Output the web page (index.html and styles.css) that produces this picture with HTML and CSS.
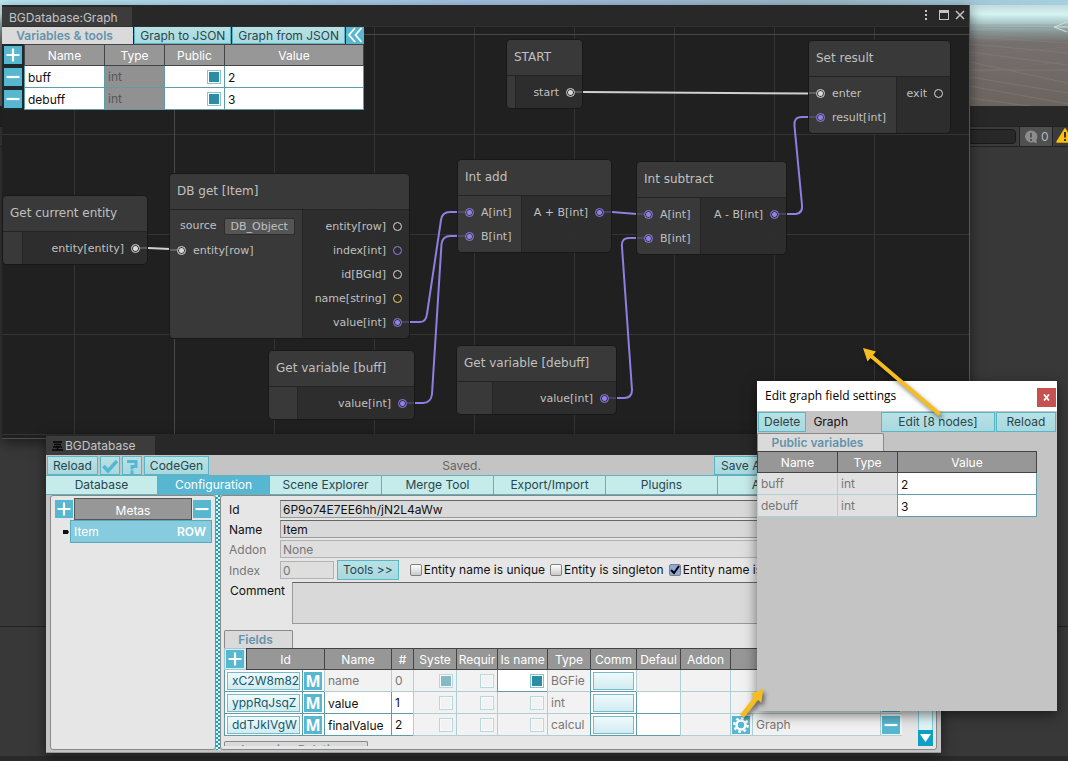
FILE: index.html
```html
<!DOCTYPE html>
<html lang="en">
<head>
<meta charset="utf-8">
<title>BGDatabase</title>
<link rel="stylesheet" href="styles.css">
</head>
<body>
<svg class="defs" aria-hidden="true">
  <symbol id="plus" viewBox="0 0 18 18"><path d="M9 2.5v13M2.5 9h13" stroke="#fff" stroke-width="2.2"/></symbol>
  <symbol id="minus" viewBox="0 0 18 18"><path d="M2.5 9h13" stroke="#fff" stroke-width="2.2"/></symbol>
</svg>
<div class="desktop">
  <div class="sky"></div>
  <svg class="scene" viewBox="0 0 98 106" aria-hidden="true">
    <g stroke="#8b8986" stroke-width="1" opacity=".4">
      <path d="M0 31l98 4M0 37l98 6M0 44l98 9M0 52l98 13M0 70h98M0 62l98 21M0 77l98 16M0 86l98 18M0 98l60 8M0 25h98M0 27l98 1" fill="none"/>
      <path d="M98 37L0 42M98 47L0 56M98 61L0 73" opacity=".4"/>
    </g>
    <path d="M97 22l-13 5 13 5M84 27h14" fill="none" stroke="#d3dede" stroke-width="1"/>
  </svg>
  <div class="console">
    <div class="search"></div>
    <span class="counter"><svg width="14" height="14" viewBox="0 0 14 14"><path d="M7 .5a6 6 0 0 1 5.500 9v4l-3-1.500A6 6 0 1 1 7 .5z" fill="#8c8c8c"/><path d="M7 3v4.500M7 9v2" stroke="#555" stroke-width="2"/></svg>0</span>
    <span class="warning"><svg width="18" height="16" viewBox="0 0 18 16"><path d="M9 1l8 13H1z" fill="#ffc107" stroke="#ffc107" stroke-width="1.500" stroke-linejoin="round"/><path d="M9 4v5.500M9 11v2" stroke="#333" stroke-width="2"/></svg></span>
  </div>

  <section class="window graph-window">
    <header class="titlebar">
      <h1 class="title-tab">BGDatabase:Graph</h1>
      <div class="window-tools">
        <svg width="42" height="14" viewBox="0 0 42 14"><g fill="#c4c4c4"><path d="M2 2h2v2H2zM2 6h2v2H2zM2 10h2v2H2z"/><path d="M16 2h10v3H16z"/></g><rect x="16.500" y="2.500" width="9" height="9" fill="none" stroke="#c4c4c4"/><path d="M33 3l8 8M41 3l-8 8" stroke="#c4c4c4" stroke-width="1.500"/></svg>
      </div>
    </header>
    <div class="canvas">
      <svg class="wires" aria-hidden="true"><g transform="translate(-2 -27)" fill="none" stroke="#8f7fe0" stroke-width="2">
        <path stroke="#d0d0cf" d="M583 92L809 93.500"/>
        <path stroke="#d0d0cf" d="M148 248L170 249"/>
        <path d="M787 214h9q7-1 6-9L794.500 126q-1-9 7-9h8"/>
        <path d="M410 322h10q6 0 7-8L441 220q1-8 9-8h8"/>
        <path d="M415 403h8q8 0 9-9L441.500 244q1-8 9-8h8"/>
        <path d="M612 212L637 214"/>
        <path d="M617 398h7q8 0 8-8L622 247q-1-9 7-9h8"/>
      </g></svg>

      <article class="node n-start"><h2>START</h2><div class="body"><div class="ins w9"></div><div class="outs"><p class="out on"><span>start</span><i></i></p></div></div></article>
      <article class="node n-result"><h2>Set result</h2><div class="body"><div class="ins w88"><p class="in on"><i></i><span>enter</span></p><p class="in on int"><i></i><span>result[int]</span></p></div><div class="outs"><p class="out"><span>exit</span><i></i></p></div></div></article>
      <article class="node n-add"><h2>Int add</h2><div class="body"><div class="ins w64"><p class="in on int"><i></i><span>A[int]</span></p><p class="in on int"><i></i><span>B[int]</span></p></div><div class="outs"><p class="out on int"><span>A + B[int]</span><i></i></p></div></div></article>
      <article class="node n-sub"><h2>Int subtract</h2><div class="body"><div class="ins w64"><p class="in on int"><i></i><span>A[int]</span></p><p class="in on int"><i></i><span>B[int]</span></p></div><div class="outs"><p class="out on int"><span>A - B[int]</span><i></i></p></div></div></article>
      <article class="node n-db"><h2>DB get [Item]</h2><div class="body"><div class="ins w133"><p class="source">source<button class="chip">DB_Object</button></p><p class="in on"><i></i><span>entity[row]</span></p></div><div class="outs"><p class="out"><span>entity[row]</span><i></i></p><p class="out int"><span>index[int]</span><i></i></p><p class="out"><span>id[BGId]</span><i></i></p><p class="out str"><span>name[string]</span><i></i></p><p class="out on int"><span>value[int]</span><i></i></p></div></div></article>
      <article class="node n-entity"><h2>Get current entity</h2><div class="body"><div class="ins w20"></div><div class="outs"><p class="out on"><span>entity[entity]</span><i></i></p></div></div></article>
      <article class="node n-buff"><h2>Get variable [buff]</h2><div class="body"><div class="ins w29"></div><div class="outs"><p class="out on int"><span>value[int]</span><i></i></p></div></div></article>
      <article class="node n-debuff"><h2>Get variable [debuff]</h2><div class="body"><div class="ins w36"></div><div class="outs"><p class="out on int"><span>value[int]</span><i></i></p></div></div></article>

      <div class="vars">
        <div class="vars-bar">
          <h2 class="tab-label vars-tab">Variables &amp; tools</h2>
          <button class="btn">Graph to JSON</button>
          <button class="btn">Graph from JSON</button>
          <button class="icon-btn" aria-label="Collapse"><svg width="18" height="18" viewBox="0 0 18 18"><path d="M9 2L3 9l6 7M15.500 2l-6 7 6 7" fill="none" stroke="#fff" stroke-width="1.800"/></svg></button>
        </div>
        <table class="grid dark">
          <colgroup><col class="c22"><col class="c80"><col class="c60"><col class="c60"><col class="c140"></colgroup>
          <tr><th class="tool"><button class="icon-btn" aria-label="Add"><svg><use href="#plus"/></svg></button></th><th>Name</th><th>Type</th><th>Public</th><th>Value</th></tr>
          <tr><td class="tool"><button class="icon-btn" aria-label="Remove buff"><svg><use href="#minus"/></svg></button></td><td><input aria-label="Name" value="buff"></td><td class="locked">int</td><td class="check"><input type="checkbox" aria-label="Public" checked></td><td><input aria-label="Value" value="2"></td></tr>
          <tr><td class="tool"><button class="icon-btn" aria-label="Remove debuff"><svg><use href="#minus"/></svg></button></td><td><input aria-label="Name" value="debuff"></td><td class="locked">int</td><td class="check"><input type="checkbox" aria-label="Public" checked></td><td><input aria-label="Value" value="3"></td></tr>
        </table>
      </div>
    </div>
  </section>

  <section class="window db-window">
    <header class="titlebar"><h1 class="title-tab db-title"><svg width="11" height="10" viewBox="0 0 11 10"><path d="M1 1h9M2 3.500h7M1 6h9M0 9h11M5.500 5v4" stroke="#050505" stroke-width="1.300"/></svg>BGDatabase</h1></header>
    <div class="db-bar">
      <button class="btn">Reload</button>
      <button class="btn glyph" aria-label="Validate"><svg width="16" height="16" viewBox="0 0 16 16"><path d="M1.500 8l4.500 5L15 3" fill="none" stroke="#57b6d3" stroke-width="3.500"/></svg></button>
      <button class="btn glyph" aria-label="Help"><svg width="16" height="16" viewBox="0 0 16 16"><path d="M3 3.500h9v5H8v3" fill="none" stroke="#57b6d3" stroke-width="3"/><path d="M6.500 12.500h3V16h-3z" fill="#57b6d3"/></svg></button>
      <button class="btn">CodeGen</button>
      <span class="status">Saved.</span>
      <button class="btn save">Save All</button>
    </div>
    <nav class="tabs">
      <button>Database</button><button class="active">Configuration</button><button>Scene Explorer</button><button>Merge Tool</button><button>Export/Import</button><button>Plugins</button><button>Addons</button>
    </nav>
    <div class="split">
      <aside class="pane metas">
        <div class="metas-head"><button class="icon-btn" aria-label="Add meta"><svg><use href="#plus"/></svg></button><h2>Metas</h2><button class="icon-btn" aria-label="Remove meta"><svg><use href="#minus"/></svg></button></div>
        <div class="meta-row"><span class="knob"></span><button class="meta"><span>Item</span><b>ROW</b></button></div>
      </aside>
      <div class="splitter"></div>
      <main class="pane details">
        <div class="details-body">
          <div class="form-row"><label for="id">Id</label><input id="id" value="6P9o74E7EE6hh/jN2L4aWw"></div>
          <div class="form-row"><label for="name">Name</label><input id="name" value="Item"></div>
          <div class="form-row off"><label for="addon">Addon</label><input id="addon" value="None" disabled></div>
          <div class="form-row index-row"><label class="off-label" for="index">Index</label><input id="index" class="short" value="0" disabled><button class="btn tools">Tools &gt;&gt;</button>
            <label class="flag"><input type="checkbox">Entity name is unique</label><label class="flag"><input type="checkbox">Entity is singleton</label><label class="flag"><input type="checkbox" checked>Entity name is empty</label></div>
          <div class="comment-row"><label for="comment">Comment</label><textarea id="comment"></textarea></div>
          <h2 class="tab-label fields-tab">Fields</h2>
          <table class="grid fields">
            <colgroup><col class="c22"><col class="c56"><col class="c22"><col class="c67"><col class="c22"><col class="c43"><col class="c41"><col class="c50"><col class="c43"><col class="c46"><col class="c44"><col class="c50"><col class="c22"><col class="c128"><col class="c22"></colgroup>
            <tr><th class="tool"><button class="icon-btn" aria-label="Add field"><svg><use href="#plus"/></svg></button></th><th colspan="2">Id</th><th>Name</th><th>#</th><th>Syste</th><th>Requir</th><th>Is name</th><th>Type</th><th>Comm</th><th>Defaul</th><th>Addon</th><th colspan="3"></th></tr>
            <tr><td colspan="2"><button class="id-btn">xC2W8m82</button></td><td class="tool"><button class="icon-btn m">M</button></td><td class="ro">name</td><td class="ro">0</td><td class="ro check dim"><input type="checkbox" aria-label="System" checked></td><td class="ro check dim"><input type="checkbox" aria-label="Required"></td><td class="check"><input type="checkbox" aria-label="Is name" checked></td><td class="ro">BGFie</td><td><button class="blank-btn" aria-label="Comment"></button></td><td class="ro"></td><td class="ro"></td><td class="ro" colspan="3"></td></tr>
            <tr><td colspan="2"><button class="id-btn">yppRqJsqZ</button></td><td class="tool"><button class="icon-btn m">M</button></td><td><input aria-label="Name" value="value"></td><td>1</td><td class="ro check dim"><input type="checkbox" aria-label="System"></td><td class="ro check dim"><input type="checkbox" aria-label="Required"></td><td class="ro check dim"><input type="checkbox" aria-label="Is name"></td><td class="ro">int</td><td><button class="blank-btn" aria-label="Comment"></button></td><td></td><td class="ro"></td><td class="ro" colspan="2"></td><td class="tool ro"><button class="icon-btn" aria-label="Remove value"><svg><use href="#minus"/></svg></button></td></tr>
            <tr><td colspan="2"><button class="id-btn">ddTJkIVgW</button></td><td class="tool"><button class="icon-btn m">M</button></td><td><input aria-label="Name" value="finalValue"></td><td>2</td><td class="ro check dim"><input type="checkbox" aria-label="System"></td><td class="ro check dim"><input type="checkbox" aria-label="Required"></td><td class="ro check dim"><input type="checkbox" aria-label="Is name"></td><td class="ro">calcul</td><td><button class="blank-btn" aria-label="Comment"></button></td><td></td><td class="ro"></td><td class="tool ro"><button class="icon-btn" aria-label="Field settings"><svg viewBox="0 0 18 18"><circle cx="9" cy="9" r="4.500" fill="none" stroke="#fff" stroke-width="2.600"/><circle cx="9" cy="9" r="6.700" fill="none" stroke="#fff" stroke-width="2.400" stroke-dasharray="2.600 2.660"/></svg></button></td><td class="ro">Graph</td><td class="tool ro"><button class="icon-btn" aria-label="Remove finalValue"><svg><use href="#minus"/></svg></button></td></tr>
          </table>
          <h2 class="tab-label relations-tab">Incoming Relations</h2>
        </div>
        <div class="scrollbar"><button aria-label="Scroll down"><svg width="15" height="16" viewBox="0 0 15 16"><path d="M2 4h11l-5.500 8z" fill="#fff"/></svg></button></div>
      </main>
    </div>
  </section>

  <section class="window popup">
    <header class="popup-title"><h1>Edit graph field settings</h1><button aria-label="Close"><svg width="7" height="7" viewBox="0 0 7 7"><path d="M1 .5l5 6M6 .5l-5 6" stroke="#fff" stroke-width="1.800"/></svg></button></header>
    <div class="popup-bar"><button class="btn">Delete</button><span>Graph</span><button class="btn edit">Edit [8 nodes]</button><button class="btn reload">Reload</button></div>
    <h2 class="tab-label public-tab">Public variables</h2>
    <table class="grid public">
      <colgroup><col class="c80"><col class="c60"><col class="c140"></colgroup>
      <tr><th>Name</th><th>Type</th><th>Value</th></tr>
      <tr><td class="ro">buff</td><td class="ro">int</td><td><input aria-label="buff value" value="2"></td></tr>
      <tr><td class="ro">debuff</td><td class="ro">int</td><td><input aria-label="debuff value" value="3"></td></tr>
    </table>
  </section>

  <svg class="arrows" aria-hidden="true"><g fill="#f5bd20">
    <path d="M863 348l13 3.500-3 3.500 68 58-2.500 3-68-58-3 3.500z"/>
    <path d="M763 689l-1.500 14-3.500-3-14 17.500-4-3 14-17.500-3.500-3z"/>
  </g></svg>
</div>
</body>
</html>
```

FILE: styles.css
```css
* { box-sizing: border-box; }
body { margin: 0; font: 12px/16px Inter, "Liberation Sans", sans-serif; color: #111; }
h1, h2, p { margin: 0; font: inherit; }
button, input, textarea { font: inherit; color: inherit; margin: 0; padding: 0; border-radius: 0; }
.defs { display: none; }

.desktop { position: relative; height: 100vh; overflow: hidden; background: linear-gradient(transparent 626px, #242424 626px, #242424 627px, transparent 627px, transparent 756px, #2a2a2a 756px) #383838; }
.sky { height: 106px; background: linear-gradient(transparent 5px, #c3d8dd 5px, #d5f4f3 14px, #afcccc 22px, #879696 32px, #756f6e 42px, #6c645f 105px), linear-gradient(90deg, #b9e8f3, #a3c2e4 45%, #9cb9c9 75%, #a6d0df); }
.scene { position: absolute; top: 0; right: 0; width: 98px; height: 106px; }
.console { margin-top: 20px; height: 21px; border-top: 1px solid #222; border-bottom: 1px solid #222; background: #3c3c3c; display: flex; justify-content: flex-end; box-shadow: 0 -20px #282828; }
.search { width: 80px; margin: 2px 3px 2px 0; background: #282828; border: 1px solid #191919; border-radius: 4px; }
.counter { width: 34px; display: flex; align-items: center; gap: 3px; padding-left: 4px; background: #505050; border-left: 1px solid #222; border-right: 1px solid #222; color: #b8b8b8; }
.warning { width: 15px; padding: 1px 0 0 3px; overflow: hidden; }

.window { position: absolute; display: flex; flex-direction: column; box-shadow: 0 4px 12px rgba(0,0,0,.5); }
.titlebar { display: flex; justify-content: space-between; flex: none; height: 21px; background: #282828; }
.title-tab { height: 19px; margin-top: 2px; padding: 3px 14px 0 7px; background: #3c3c3c; color: #c4c4c4; }
.window-tools { padding: 3px 4px 0 0; }

.graph-window { left: 2px; top: 5px; right: 98px; height: 434px; border-right: 1px solid #555; border-bottom: 1px solid #4c4c4c; }
.canvas { position: relative; flex: 1; overflow: hidden; background-color: #202020; border-top: 1px solid #303030;
  background-image: linear-gradient(90deg, transparent 172px, #484848 172px, #484848 173px, transparent 173px), linear-gradient(transparent 7px, #484848 7px, #484848 8px, transparent 8px), linear-gradient(90deg, transparent 72px, #343434 72px, #343434 73px, transparent 73px), linear-gradient(transparent 7px, #343434 7px, #343434 8px, transparent 8px);
  background-size: auto, auto, 100px 100px, 100px 100px; }
.wires { position: absolute; inset: 0; width: 100%; height: 100%; }

.node { position: absolute; border: 1px solid #181818; border-radius: 5px; overflow: hidden; background: rgba(46,46,46,.94); color: #c0c0c0; font: 11px/24px "DejaVu Sans", Verdana, sans-serif; }
.node h2 { height: 36px; line-height: 34px; padding-left: 7px; font-size: 12px; background: #393939; border-bottom: 1px solid #242424; }
.body { display: flex; }
.ins { flex: none; padding: 4px 0; background: #393939; border-right: 1px solid #242424; }
.outs { flex: 1; padding: 4px 0; }
.w9 { width: 9px; } .w20 { width: 20px; } .w29 { width: 29px; } .w36 { width: 36px; } .w64 { width: 64px; } .w88 { width: 88px; } .w133 { width: 133px; }
.node p { position: relative; display: flex; align-items: center; height: 24px; white-space: nowrap; --port: #d8d8d8; }
.node p span { padding-top: 2px; }
.node p.int { --port: #8f7fe8; }
.node p.str { --port: #f5d060; }
.in { gap: 7px; padding-left: 7px; }
.out { gap: 7px; padding-right: 7px; justify-content: flex-end; }
.node i { width: 9px; height: 9px; border: 1px solid var(--port); border-radius: 50%; }
.on i { background: radial-gradient(circle, var(--port) 2px, transparent 3px); }
.on::after { content: ""; position: absolute; top: 11px; width: 7px; height: 2px; background: var(--port); opacity: .25; }
.in.on::after { left: 0; }
.out.on::after { right: 0; }
.source { padding-left: 10px; gap: 7px; }
.chip { height: 17px; padding: 0 6px; line-height: 15px; border: 1px solid #2c2c2c; border-radius: 2px; background: #555; }
.n-start { left: 504px; top: 12px; width: 77px; }
.n-result { left: 806px; top: 13px; width: 143px; }
.n-add { left: 455px; top: 132px; width: 155px; }
.n-sub { left: 634px; top: 134px; width: 151px; }
.n-db { left: 167px; top: 146px; width: 241px; }
.n-entity { left: 0; top: 168px; width: 146px; }
.n-buff { left: 266px; top: 323px; width: 147px; }
.n-debuff { left: 454px; top: 318px; width: 161px; }

.vars { position: relative; width: 362px; margin-top: -1px; }
.vars-bar { display: flex; gap: 1px; height: 18px; }
.tab-label { font-weight: 600; font-size: 12px; color: #6593aa; background: #dadada; border: 1px solid #8a8a8a; border-bottom: 0; border-radius: 2px 2px 0 0; text-align: center; white-space: nowrap; }
.vars-tab { flex: 1; line-height: 19px; border: 0; padding-right: 6px; }
.btn { flex: none; height: 20px; padding: 0 5px; border: 1px solid #58b7c6; background: linear-gradient(#b9e1e4, #a8d9df); color: #28464e; white-space: nowrap; overflow: hidden; font-size: 12px; }
.vars .btn { height: 18px; padding: 1px 5px 0; }
.icon-btn { display: block; flex: none; width: 18px; height: 18px; border: 0; background: #57b7d1; color: #fff; }
.icon-btn svg { display: block; width: 18px; height: 18px; }
.m { font: 700 16px/16px "Open Sans", sans-serif; }

.grid { table-layout: fixed; width: 0; border-collapse: separate; border-spacing: 0; }
.grid th { height: 22px; padding: 2px 0 0; font-weight: 400; background: #979797; color: #fff; border: 1px solid #444; border-width: 1px 0 1px 1px; white-space: nowrap; overflow: hidden; }
.grid td { height: 22px; padding: 1px 0 0 3px; background: #fff; border: 1px solid #5d9ca8; border-width: 0 0 1px 1px; white-space: nowrap; overflow: hidden; }
.grid tr > :last-child { border-right-width: 1px; }
.grid td > input:not([type]) { display: block; width: 100%; height: 20px; border: 0; background: none; }
.grid th.tool, .grid td.tool { padding: 0 0 0 1px; border-right: 0; }
.grid th.tool { background: #d9ecef; border-color: #9acbd6; }
.grid .check { text-align: right; padding: 0 3px 0 0; }
.dark .tool, .grid.dark th.tool, .grid.dark td.tool { background: #1d2a2c; border-color: #1d2a2c; }
.grid .locked { background: #919191; color: #575757; }
.grid .ro { background: #f2f2f2; color: #777; border-color: #b0cfd5; }
.public .ro { background: #e1e1e1; }
.check input { appearance: none; display: block; width: 14px; height: 14px; margin-left: auto; border: 1px solid #8ac3cf; background: #2b8ca3; box-shadow: inset 0 0 0 1px #fff; }
.check input:not(:checked) { background: #f3f3f3; }
.dim input { opacity: .55; }
.c22 { width: 22px; } .c41 { width: 41px; } .c43 { width: 43px; } .c44 { width: 44px; } .c46 { width: 46px; } .c50 { width: 50px; } .c56 { width: 56px; } .c60 { width: 60px; } .c67 { width: 67px; } .c80 { width: 80px; } .c128 { width: 128px; } .c140 { width: 140px; }

.db-window { left: 46px; top: 434px; right: 127px; height: 319px; background: #c4c4c4; border-bottom: 1px solid #999; }
.db-title { display: flex; align-items: center; gap: 2px; padding: 1px 20px 0 6px; }
.db-bar { display: flex; gap: 2px; height: 20px; padding: 1px 1px 0; }
.db-bar .btn { height: 19px; }
.db-bar .glyph { width: 20px; padding: 0 1px; }
.glyph svg { display: block; }
.status { flex: 1; text-align: center; color: #666; padding: 2px 0 0; }
.db-bar .save { width: 226px; padding-left: 6px; text-align: left; }
.tabs { display: grid; grid-template-columns: repeat(7, 112px); height: 20px; background: #c5ebea; border: 1px solid #67aebb; border-width: 1px 0; overflow: hidden; }
.tabs button { border: 0; border-right: 1px solid #67aebb; background: #c5ebea; color: #28464e; font-size: 12px; }
.tabs .active { background: #57b6d1; color: #fff; }
.split { flex: 1; min-height: 0; display: flex; padding: 0 4px 2px; }
.pane { background: #e6e6e6; border: 1px solid #888; border-radius: 3px; overflow: hidden; }
.metas { width: 166px; padding: 2px 3px; }
.metas-head { display: flex; gap: 1px; height: 22px; align-items: center; padding: 0 1px; }
.metas-head h2 { flex: 1; height: 22px; line-height: 23px; background: #979797; border: 1px solid #555; color: #fff; text-align: center; }
.meta-row { display: flex; align-items: center; }
.knob { width: 5px; height: 4px; margin: 0 2px 0 9px; background: #111; box-shadow: 2px 0 0 -1px #555; }
.meta { flex: 1; display: flex; justify-content: space-between; height: 23px; align-items: center; padding: 0 5px 0 3px; border: 1px solid #58a9bd; background: #87cbde; color: #fff; }
.meta b { font-weight: 600; }
.splitter { width: 4px; background: conic-gradient(#12a3bd 25%, #dff6f8 0 50%, #12a3bd 0 75%, #dff6f8 0) 0 0 / 4px 4px; }
.details { flex: 1; display: flex; min-width: 0; padding: 3px 3px; }
.details-body { flex: 1; min-width: 0; overflow: hidden; }
.form-row { display: flex; align-items: center; height: 20px; white-space: nowrap; }
.form-row > label:first-child { flex: none; width: 56px; padding: 2px 0 0 5px; }
.form-row > input { flex: 1; height: 18px; padding-left: 2px; border: 1px solid #9a9a9a; border-top-color: #666; background: #d9d9d9; }
.form-row > input:disabled { background: #dedede; border-color: #b2b2b2; color: #777; }
.form-row > .short { flex: none; width: 54px; }
.index-row { margin-top: 1px; }
.off, .off-label { color: #777; }
.tools { margin: 0 11px 0 3px; }
.flag { display: flex; align-items: center; gap: 2px; margin-right: 5px; }
.flag input { appearance: none; width: 12px; height: 12px; border: 1px solid #808080; border-radius: 2px; background: linear-gradient(#fff, #c9c9c9); }
.flag input:checked { background: url("data:image/svg+xml,%3Csvg xmlns='http://www.w3.org/2000/svg' viewBox='0 0 10 10'%3E%3Cpath d='M1 5l3 3 5-7' fill='none' stroke='%23000' stroke-width='2'/%3E%3C/svg%3E") #8baadb; }
.comment-row { display: flex; align-items: flex-start; padding-top: 2px; }
.comment-row label { width: 68px; padding: 1px 0 0 6px; }
.comment-row textarea { flex: 1; height: 42px; resize: none; border: 1px solid #9a9a9a; border-top-color: #666; background: #d9d9d9; }
.fields-tab { width: 69px; height: 18px; line-height: 18px; margin-top: 6px; padding-right: 6px; }
.id-btn { display: block; width: 73px; height: 18px; padding: 0 4px; margin-left: -1px; border: 1px solid #7ab9c7; background: linear-gradient(#f0fafc, #d0ecf2); color: #17596a; overflow: hidden; }
.blank-btn { display: block; width: 41px; height: 18px; margin-left: -1px; border: 1px solid #7ab9c7; background: linear-gradient(#f0fafc, #d0ecf2); }
.relations-tab { width: 144px; height: 20px; margin-top: 5px; line-height: 16px; }
.scrollbar { flex: none; display: flex; width: 15px; align-items: flex-end; background: #e2f6f7; border: 1px solid #7ac9da; border-bottom: 0; }
.scrollbar button { width: 15px; height: 16px; margin: 0 -1px; padding: 0; flex: none; border: 0; background: #109fc4; }
.scrollbar svg { display: block; }

.popup { right: 11px; top: 381px; width: 300px; height: 330px; background: #c4c4c4; }
.popup-title { display: flex; height: 30px; justify-content: space-between; align-items: center; padding: 0 1px 0 8px; background: #fff; font: 12px/16px "Open Sans", "Noto Sans", sans-serif; color: #000; }
.popup-title button { width: 19px; height: 19px; margin-top: 3px; border: 0; background: #c75050; }
.popup-title svg { display: block; margin: 0 auto; }
.popup-bar { display: flex; align-items: center; gap: 1px; padding: 1px 1px 0; }
.popup-bar span { flex: 1; padding-left: 6px; }
.edit { width: 114px; }
.reload { width: 60px; }
.public-tab { width: 127px; height: 18px; line-height: 18px; margin-top: 1px; padding-right: 6px; }
.arrows { position: absolute; inset: 0; width: 100%; height: 100%; pointer-events: none; filter: drop-shadow(2px 3px 2px rgba(0,0,0,.5)); }
```
